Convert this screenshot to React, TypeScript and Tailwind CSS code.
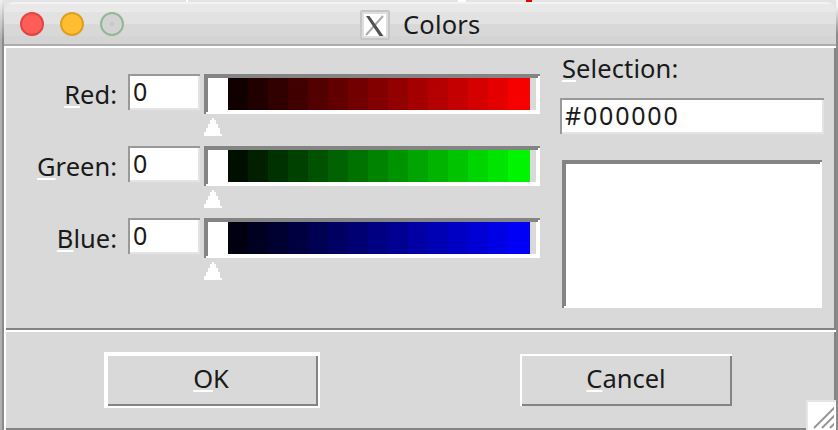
import React from 'react';

const ramps = {
  red: (v: number) => `rgb(${v},0,0)`,
  green: (v: number) => `rgb(0,${v},0)`,
  blue: (v: number) => `rgb(0,0,${v})`,
};

const levels = Array.from({ length: 15 }, (_, i) => Math.round(16 + i * 16.4));

const raised = 'shadow-[inset_2px_2px_#fff,inset_-2px_-2px_#848484]';
const sunken = 'shadow-[inset_2px_2px_#848484,inset_-2px_-2px_#fff,inset_4px_4px_#848484,inset_-4px_-4px_#fff]';

function Mnemonic({ text }: { text: string }) {
  return (
    <span>
      <span className="underline decoration-white decoration-2 underline-offset-[2px] [text-decoration-skip-ink:none]">{text[0]}</span>
      {text.slice(1)}
    </span>
  );
}

function Entry({ value, className }: { value: string; className: string }) {
  return (
    <div className={`h-9 bg-white pl-[5px] pt-[1px] text-[25px] leading-[32px] tracking-[1.8px] shadow-[inset_2px_2px_#999,inset_-2px_-2px_#e4e4e4] ${className}`}>
      {value}
    </div>
  );
}

function Channel({ label, ramp }: { label: string; ramp: (v: number) => string }) {
  return (
    <div className="flex h-[72px] items-start">
      <div className="mr-[11px] w-[111px] pt-[3px] text-right leading-[34px]">
        <Mnemonic text={label} />
      </div>
      <Entry value="0" className="w-[72px]" />
      <div className="ml-1 w-[336px]">
        <div className={`flex h-10 p-1 ${sunken}`}>
          <div className="w-5 bg-white" />
          {levels.map((v, i) => (
            <div key={v} className={i === 14 ? 'w-[22px]' : 'w-5'} style={{ backgroundColor: ramp(v) }} />
          ))}
        </div>
        <svg className="mt-1 block" width="18" height="18" shapeRendering="crispEdges">
          <path d="M8 0h2v2h2v4h2v4h2v6h2v2H0v-4h2v-4h2V6h2V2h2z" fill="#fff" />
        </svg>
      </div>
    </div>
  );
}

function TitleBar() {
  return (
    <div className="h-[46px] bg-[#e4e4e4]">
      <div className="flex h-0.5">
        <div className="w-[182px]" />
        <div className="w-0.5 bg-white" />
        <div className="w-[270px]" />
        <div className="w-2 bg-white" />
        <div className="w-[60px]" />
        <div className="w-1.5 bg-[#e60000]" />
      </div>
      <div className="flex h-11 items-start rounded-t-[10px] border-b-2 border-[#acacac] bg-[linear-gradient(#f3f3f3_0px,#f3f3f3_2px,#e9e9e9_2px,#e9e9e9_10px,#e2e2e2_10px,#e2e2e2_22px,#d8d8d8_22px,#d8d8d8_34px,#d4d4d4_34px)]">
        <div className="ml-4 mt-[10px] flex gap-4">
          <div className="size-6 rounded-full border-2 border-[#e2443f] bg-[#ff5d56]" />
          <div className="size-6 rounded-full border-2 border-[#dea11f] bg-[#ffbe2f]" />
          <div className="flex size-6 items-center justify-center rounded-full border-2 border-[#94b698] bg-[#d3d3d3]">
            <div className="size-1 bg-[#c6c6c6]" />
          </div>
        </div>
        <svg className="ml-[236px] mt-2 block" width="30" height="30">
          <rect x="1" y="1" width="28" height="28" rx="1" fill="#fff" stroke="#c6c6c6" strokeWidth="2" />
          <rect x="3" y="3" width="24" height="24" fill="none" stroke="#dedede" strokeWidth="2" />
          <path d="M23 6L6 25" stroke="#aaa" strokeWidth="2" />
          <path d="M6 6h3.5l14 20h-4z" fill="#505050" />
        </svg>
        <div className="ml-[13px] mt-[5px] text-[25.5px] leading-[34px] tracking-[0.2px] text-[#1a1a1a]">Colors</div>
      </div>
    </div>
  );
}

function Grip() {
  return (
    <div className="absolute bottom-0 right-0 h-[30px] w-[30px] border-l-2 border-t-2 border-[#e6e6e6] bg-white">
      <svg className="block" width="26" height="28" stroke="#989898" strokeWidth="2">
        <path d="M6 26L28 4M14 26L28 12M22 26L28 20" />
      </svg>
    </div>
  );
}

export default function App() {
  return (
    <div className="flex h-[430px] w-[838px] overflow-hidden font-['Noto_Sans',sans-serif] text-[25.5px] text-[#1a1a1a]">
      <div className="w-0.5 shrink-0 bg-[linear-gradient(#f0f0f0_0px,#b0b0b0_40px)]" />
      <div className="w-0.5 shrink-0 bg-[linear-gradient(#e8e8e8_0px,#8b8b8b_40px)]" />
      <div className="relative flex w-[832px] shrink-0 flex-col bg-[#d9d9d9]">
        <TitleBar />
        <div className={`flex h-[284px] p-0.5 ${raised}`}>
          <div className="w-[534px] pt-[26px]">
            <Channel label="Red:" ramp={ramps.red} />
            <Channel label="Green:" ramp={ramps.green} />
            <Channel label="Blue:" ramp={ramps.blue} />
          </div>
          <div className="ml-5 w-[264px]">
            <div className="ml-0.5 mt-[3px] h-[35px] leading-[34px] tracking-[0.1px]">
              <Mnemonic text="Selection:" />
            </div>
            <Entry value="#000000" className="mt-3 w-[264px]" />
            <div className={`ml-0.5 mt-[26px] h-[148px] w-[260px] bg-white ${sunken}`} />
          </div>
        </div>
        <div className={`flex h-[100px] items-start p-0.5 ${raised}`}>
          <div className="ml-[98px] mt-5 h-14 w-[216px] border-2 border-white">
            <div className={`h-[52px] pr-0.5 text-center leading-[49px] ${raised}`}>
              <Mnemonic text="OK" />
            </div>
          </div>
          <div className={`ml-[200px] mt-[22px] h-[52px] w-[212px] text-center leading-[49px] ${raised}`}>
            <Mnemonic text="Cancel" />
          </div>
        </div>
        <Grip />
      </div>
      <div className="w-0.5 shrink-0 bg-[linear-gradient(#f4f4f4_0px,#f4f4f4_6px,#8b8b8b_34px)]" />
    </div>
  );
}
